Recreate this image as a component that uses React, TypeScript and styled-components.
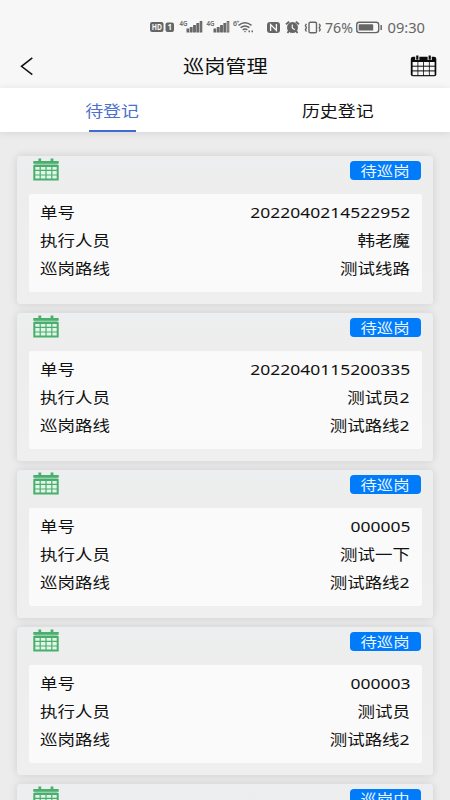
import React from 'react';
import styled, { createGlobalStyle } from 'styled-components';

const GlobalStyle = createGlobalStyle`
  * { box-sizing: border-box; }
  html, body { margin: 0; height: 100%; overflow: hidden; }
  body { background: #ececec; font-family: "Noto Sans", "Noto Sans CJK SC", sans-serif; color: #111; }
`;

const Screen = styled.div`
  height: 800px;
  width: 450px;
  overflow: hidden;
  display: flex;
  flex-direction: column;
`;

/* Wide lettering: glyphs are stretched horizontally from the given edge. */
const Wide = styled.span<{ $from?: string; $size?: number }>`
  display: inline-block;
  white-space: nowrap;
  font-size: ${p => p.$size ?? 15}px;
  transform: scaleX(1.165);
  transform-origin: ${p => p.$from ?? 'center'} center;
`;

const StatusBar = styled.div`
  height: 45px;
  flex: none;
  background: #f7f7f7;
  padding: 10px 0 0 150px;
  color: #666;
`;

const StatusIcons = styled.svg`
  display: block;
  width: 290px;
  height: 35px;
  font-family: "Noto Sans", sans-serif;
`;

const Header = styled.header`
  height: 43px;
  flex: none;
  display: grid;
  grid-template-columns: 60px 1fr 60px;
  align-items: center;
  background: #f7f7f7;
  text-align: center;
`;

const Title = styled.div`
  padding-bottom: 4px;
`;

const BackIcon = styled.svg`
  width: 14px;
  height: 20px;
  margin: 0 0 1px 20px;
`;

const HeaderCalendar = styled.svg`
  width: 27px;
  height: 22px;
  margin: 0 0 1px 20px;
`;

const Tabs = styled.nav`
  height: 44px;
  flex: none;
  display: grid;
  grid-template-columns: 1fr 1fr;
  background: #fff;
  box-shadow: 0 1px 8px rgba(0, 0, 0, 0.1);
`;

const Tab = styled.div<{ $active?: boolean }>`
  display: flex;
  flex-direction: column;
  align-items: center;
  justify-content: space-between;
  padding-top: 12px;
  line-height: 24px;
  color: ${p => (p.$active ? '#4d70cb' : '#111')};
  &::after {
    content: '';
    width: 47px;
    height: 2px;
    background: ${p => (p.$active ? '#4169d2' : 'transparent')};
  }
`;

const List = styled.main`
  flex: none;
  display: flex;
  flex-direction: column;
  gap: 9px;
  padding: 23.5px 17px 0;
`;

const Card = styled.article`
  height: 148px;
  flex: none;
  padding: 0 11.5px;
  background: linear-gradient(#edeeef, #ededed 30%, #efefef);
  border-radius: 4px;
  box-shadow: 0 0 9px rgba(0, 0, 0, 0.13);
`;

const CardTop = styled.div`
  height: 38px;
  display: flex;
  justify-content: space-between;
  align-items: flex-start;
  padding: 2.5px 1px 0 4.5px;
`;

const CardCalendar = styled.svg`
  width: 26px;
  height: 23px;
`;

const Badge = styled.div`
  width: 71px;
  height: 19px;
  margin: 2.5px 0 0;
  border-radius: 4px;
  background: #007bfa;
  color: #eaf6ff;
  text-align: center;
  line-height: 18px;
`;

const Details = styled.div`
  height: 98px;
  padding: 4.5px 11.5px 0;
  background: #fafafa;
  border-radius: 2px;
`;

const Row = styled.div`
  height: 28px;
  display: flex;
  justify-content: space-between;
  line-height: 28px;
`;

const records = [
  { status: '待巡岗', id: '2022040214522952', person: '韩老魔', route: '测试线路' },
  { status: '待巡岗', id: '2022040115200335', person: '测试员2', route: '测试路线2' },
  { status: '待巡岗', id: '000005', person: '测试一下', route: '测试路线2' },
  { status: '待巡岗', id: '000003', person: '测试员', route: '测试路线2' },
  { status: '巡岗中' },
];

function Signal({ x, faded }: { x: number; faded?: boolean }) {
  return (
    <g fill="#666">
      <rect x={x} y="19" width="1.8" height="3" />
      <rect x={x + 3.3} y="17.5" width="1.8" height="4.5" />
      <rect x={x + 6.6} y="15.5" width="1.8" height="6.5" />
      <rect x={x + 9.9} y="13.5" width="1.8" height="8.5" />
      <rect x={x + 13.2} y="11.5" width="1.6" height="10.5" fill={faded ? '#c9c9c9' : '#666'} />
    </g>
  );
}

function Status() {
  return (
    <StatusBar>
      <StatusIcons viewBox="0 0 290 35" fill="none" stroke="#666">
        <g stroke="none" fill="#666">
          <rect x="0" y="12" width="13.5" height="10" rx="2" />
          <rect x="15.5" y="12.5" width="8.5" height="9.5" rx="2" />
          <text x="1.7" y="20.3" fontSize="8" fontWeight="700" fill="#f7f7f7" textLength="10.2" lengthAdjust="spacingAndGlyphs">HD</text>
          <text x="17.5" y="20.3" fontSize="8" fontWeight="700" fill="#f7f7f7">1</text>
          <text x="29.5" y="16" fontSize="7" fontWeight="600" textLength="8" lengthAdjust="spacingAndGlyphs">4G</text>
          <text x="56.5" y="16" fontSize="7" fontWeight="600" textLength="8" lengthAdjust="spacingAndGlyphs">4G</text>
          <text x="83" y="16" fontSize="7" fontWeight="600">6</text>
          <text x="86.6" y="13.5" fontSize="5" fontWeight="700">+</text>
        </g>
        <Signal x={37} />
        <Signal x={64} faded />
        <g strokeWidth="1.5">
          <path d="M88.5 15.3Q95 10.3 101.5 15.3M90.6 17.7Q95 14.3 99.4 17.7M92.7 19.8Q95 18.2 97.3 19.8" />
          <circle cx="95" cy="21.6" r=".8" fill="#666" stroke="none" />
          <path d="M98.5 21.3h1.5M101.5 21.3h1.5" strokeWidth="1.8" />
        </g>
        <rect x="117" y="12" width="13" height="11" rx="3" fill="#666" stroke="none" />
        <path d="M120.6 21v-6.5l5.8 6v-6.5" stroke="#f7f7f7" strokeWidth="1.3" />
        <circle cx="142.5" cy="17.6" r="5.5" fill="#666" stroke="none" />
        <path d="M136 14.3l3.2-2.6M149 14.3l-3.2-2.6M138.8 21l-1.3 2M146.2 21l1.3 2" strokeWidth="1.8" />
        <path d="M142.3 14.5v3.5l2.5 1.8" stroke="#f7f7f7" strokeWidth="1.2" />
        <rect x="159" y="12.2" width="7.5" height="10.5" rx="1.3" strokeWidth="1.4" />
        <path d="M156.4 13.7l-1 2 1 2-1 2 1 1.8M169.2 13.7l1 2-1 2 1 2-1 1.8" strokeWidth="1.4" />
        <text x="175" y="22.6" fontSize="13.6" fill="#666" stroke="none" textLength="28" lengthAdjust="spacingAndGlyphs">76%</text>
        <rect x="206.7" y="12.2" width="22" height="10.4" rx="2.5" strokeWidth="1.4" />
        <rect x="208.7" y="14.2" width="14.5" height="6.4" rx=".7" fill="#666" stroke="none" />
        <path d="M231.2 15v5" strokeWidth="1.5" />
        <text x="237.5" y="22.6" fontSize="13.8" fill="#666" stroke="none" textLength="37.5" lengthAdjust="spacingAndGlyphs">09:30</text>
      </StatusIcons>
    </StatusBar>
  );
}

export default function App() {
  return (
    <>
      <GlobalStyle />
      <Screen>
        <Status />
        <Header>
          <BackIcon viewBox="0 0 14 20" fill="none" stroke="#111" strokeWidth="1.5">
            <path d="M12.3 1.8L1.5 10.3l10.8 8.4" />
          </BackIcon>
          <Title><Wide $size={18.2}>巡岗管理</Wide></Title>
          <HeaderCalendar viewBox="0 0 27 22">
            <path d="M3 1.8h21q2.3 0 2.3 2.3v15.2q0 2-2 2H3q-2.2 0-2.2-2V4.1Q.8 1.8 3 1.8z" fill="#0b0b0b" />
            <path d="M7.3 0v5M19.7 0v5" stroke="#f7f7f7" strokeWidth="4.2" />
            <path d="M7.3 .4v4.3M19.7 .4v4.3" stroke="#0b0b0b" strokeWidth="2.2" />
            <g fill="#f7f7f7">
              {[7, 11.7, 16.4].map(y => [2.6, 8.3, 14, 19.7].map(x => (
                <rect key={`${x}-${y}`} x={x} y={y} width="4.9" height="3.7" />
              )))}
            </g>
          </HeaderCalendar>
        </Header>
        <Tabs>
          <Tab $active><Wide $size={15.4}>待登记</Wide></Tab>
          <Tab><Wide $size={15.4}>历史登记</Wide></Tab>
        </Tabs>
        <List>
          {records.map((r, i) => (
            <Card key={i}>
              <CardTop>
                <CardCalendar viewBox="0 0 26 23" fill="none" stroke="#48b06c">
                  <path d="M.3 4.3h25.4M6.8 .6v4M19 .6v4" strokeWidth="2.8" />
                  <path d="M1.3 8h23.4v13.5H1.3z" strokeWidth="2" fill="#e3f4e8" />
                  <path d="M1.3 12.4h23.4M1.3 17h23.4M7.2 8v13.5M13 8v13.5M18.8 8v13.5" strokeWidth="1.2" />
                  <path d="M1.3 6.5h23.4" strokeWidth="1.6" opacity=".5" />
                </CardCalendar>
                <Badge><Wide $size={14}>{r.status}</Wide></Badge>
              </CardTop>
              {r.id && (
                <Details>
                  <Row><Wide $from="left">单号</Wide><Wide $from="right">{r.id}</Wide></Row>
                  <Row><Wide $from="left">执行人员</Wide><Wide $from="right">{r.person}</Wide></Row>
                  <Row><Wide $from="left">巡岗路线</Wide><Wide $from="right">{r.route}</Wide></Row>
                </Details>
              )}
            </Card>
          ))}
        </List>
      </Screen>
    </>
  );
}
